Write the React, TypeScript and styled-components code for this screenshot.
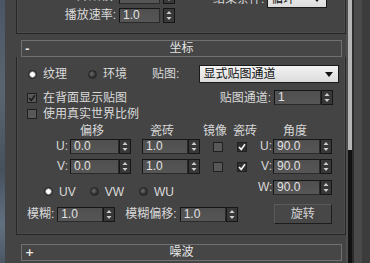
import React from 'react'
import styled, { createGlobalStyle } from 'styled-components'

const GlobalStyle = createGlobalStyle`
  html, body {
    margin: 0;
    padding: 0;
    background: #444444;
  }
  body {
    width: 370px;
    height: 263px;
    overflow: hidden;
    font-family: "Liberation Sans", "Noto Sans CJK SC", sans-serif;
    font-size: 12px;
    color: #d8d8d8;
  }
`

const Screen = styled.div`
  display: flex;
  width: 370px;
  height: 263px;
  overflow: hidden;
  background: #444444;
`

const DesktopEdge = styled.div`
  width: 5px;
  flex: none;
  background: linear-gradient(180deg, #4a5664 0%, #5a6571 35%, #46515d 65%, #617080 85%, #4c5763 100%);
`

const Gutter = styled.div`
  width: 11px;
  flex: none;
`

const Panel = styled.div`
  width: 330px;
  flex: none;
  display: flex;
  flex-direction: column;
`

const Frame = styled.div`
  border: 1px solid #262626;
  border-top: none;
  box-shadow: inset 1px 0 0 #4c4c4c, inset -1px -1px 0 #4c4c4c;
`

const TopBody = styled.div`
  display: flex;
  margin-top: -12px;
  padding-bottom: 10px;
`

const LeftCol = styled.div`
  display: flex;
  flex-direction: column;
  gap: 3px;
`

const LabeledRow = styled.div`
  display: flex;
  align-items: center;
  height: 16px;
`

const Label = styled.span<{ $w?: number; $ml?: number }>`
  display: inline-block;
  ${({ $w }) => ($w ? `width: ${$w}px; text-align: right;` : '')}
  margin-left: ${({ $ml }) => $ml ?? 0}px;
  margin-right: 3px;
  line-height: 14px;
  white-space: nowrap;
  color: #dadada;
`

const RightCol = styled.div`
  display: flex;
  align-items: center;
  margin-left: 38px;
  margin-top: 2px;
  height: 18px;
`

const Header = styled.div<{ $mt: number }>`
  position: relative;
  margin: ${({ $mt }) => $mt}px 4px 0 5px;
  height: 17px;
  box-sizing: border-box;
  border: 1px solid #707070;
  background: #464646;
  display: flex;
  align-items: center;
  justify-content: center;
  color: #e4e4e4;
  line-height: 15px;
`

const HeaderSign = styled.span`
  position: absolute;
  left: 3px;
  top: 0;
  font-family: "DejaVu Sans", sans-serif;
  font-size: 11px;
  font-weight: bold;
  line-height: 15px;
  color: #e8e8e8;
`

const CoordBody = styled(Frame)`
  padding: 8px 0 10px 10px;
  display: flex;
  flex-direction: column;
`

const Row = styled.div<{ $h: number; $mt: number }>`
  display: flex;
  align-items: center;
  height: ${({ $h }) => $h}px;
  margin-top: ${({ $mt }) => $mt}px;
`

const RadioDot = styled.span<{ $on?: boolean; $ml?: number }>`
  display: inline-block;
  flex: none;
  width: 9px;
  height: 9px;
  border-radius: 50%;
  box-sizing: border-box;
  margin-left: ${({ $ml }) => $ml ?? 0}px;
  margin-right: 6px;
  border: 1px solid #252525;
  background: ${({ $on }) =>
    $on
      ? 'radial-gradient(circle at 50% 50%, #ffffff 0 2px, #9a9a9a 2.6px, #5a5a5a 4px)'
      : 'radial-gradient(circle at 40% 40%, #5e5e5e 0 1px, #2e2e2e 3.5px)'};
`

const ChoiceText = styled.span<{ $ml?: number }>`
  margin-left: ${({ $ml }) => $ml ?? 0}px;
  line-height: 14px;
  color: #dadada;
  white-space: nowrap;
`

const Dropdown = styled.div<{ $w: number; $h: number; $ml?: number }>`
  display: flex;
  align-items: center;
  justify-content: space-between;
  width: ${({ $w }) => $w}px;
  height: ${({ $h }) => $h}px;
  margin-left: ${({ $ml }) => $ml ?? 0}px;
  box-sizing: border-box;
  padding: 0 5px 0 3px;
  background: linear-gradient(180deg, #f2f2f2, #dcdcdc);
  border: 1px solid #1a1a1a;
  color: #111;
  line-height: 14px;
`

const Box = styled.span<{ $tone: 'light' | 'dark'; $ml?: number }>`
  display: inline-flex;
  align-items: center;
  justify-content: center;
  flex: none;
  width: 10px;
  height: 10px;
  box-sizing: border-box;
  margin-left: ${({ $ml }) => $ml ?? 0}px;
  border: 1px solid #202020;
  background: ${({ $tone }) => ($tone === 'light' ? '#585858' : '#2f2f2f')};
`

const Spacer = styled.div`
  flex: 1;
`

const FieldWrap = styled.div<{ $gap?: number; $ml?: number; $mr?: number }>`
  display: flex;
  height: 15px;
  gap: ${({ $gap }) => $gap ?? 0}px;
  margin-left: ${({ $ml }) => $ml ?? 0}px;
  margin-right: ${({ $mr }) => $mr ?? 0}px;
  flex: none;
`

const NumBox = styled.div<{ $w: number }>`
  width: ${({ $w }) => $w}px;
  box-sizing: border-box;
  border: 1px solid #161616;
  border-right-color: #2a2a2a;
  border-bottom-color: #2a2a2a;
  background: linear-gradient(180deg, #4f4f4f, #565656);
  padding-left: 3px;
  line-height: 13px;
  color: #e2e2e2;
  font-size: 12px;
`

const SpinBox = styled.div`
  width: 12px;
  box-sizing: border-box;
  border: 1px solid #161616;
  background: #383838;
  display: flex;
  align-items: center;
  justify-content: center;
`

const UVGrid = styled.div`
  display: grid;
  grid-template-columns: 24px 62px 11px 58px 29px 29px 15px 60px;
  grid-template-rows: 12px 20px 21px 15px;
  margin-left: 18px;
  margin-top: 7px;
  align-items: start;
`

const ColHead = styled.div<{ $col: number; $ml: number }>`
  grid-column: ${({ $col }) => $col};
  grid-row: 1;
  padding-left: ${({ $ml }) => $ml}px;
  line-height: 12px;
  margin-top: -2px;
  white-space: nowrap;
`

const AxisLabel = styled.div<{ $col: number; $row: number }>`
  grid-column: ${({ $col }) => $col};
  grid-row: ${({ $row }) => $row};
  text-align: right;
  padding-right: 1px;
  line-height: 15px;
`

const Cell = styled.div<{ $col: number; $row: number; $pl?: number; $pt?: number }>`
  grid-column: ${({ $col }) => $col};
  grid-row: ${({ $row }) => $row};
  padding-left: ${({ $pl }) => $pl ?? 0}px;
  padding-top: ${({ $pt }) => $pt ?? 0}px;
  display: flex;
`

const AxisChoices = styled.div`
  grid-column: 1 / 7;
  grid-row: 4;
  display: flex;
  align-items: center;
  height: 15px;
  margin-top: 4px;
  margin-left: -1px;
`

const ActionButton = styled.div`
  width: 58px;
  height: 20px;
  box-sizing: border-box;
  margin-left: 36px;
  border: 1px solid #5a5a5a;
  border-right-color: #1c1c1c;
  border-bottom-color: #1c1c1c;
  background: #474747;
  display: flex;
  align-items: center;
  justify-content: center;
  line-height: 14px;
  color: #d4d4d4;
`

const ScrollZone = styled.div`
  flex: 1;
  display: flex;
`

const ScrollEdge = styled.div`
  width: 2px;
  background: #4f4f4f;
`

const Thumb = styled.div`
  width: 4px;
  background: linear-gradient(180deg, #b6b6b6 0, #b6b6b6 150px, #121212 150px);
`

const TrackDark = styled.div`
  width: 2px;
  background: #2c2c2c;
`

const TrackMid = styled.div`
  width: 8px;
  background: #4a4a4a;
`

const TrackFar = styled.div`
  flex: 1;
  background: #3c3c3c;
`

const Spinner = () => (
  <SpinBox>
    <svg width="6" height="11" viewBox="0 0 6 11">
      <path d="M3 1 L5.5 4 H0.5 Z" fill="#cfcfcf" />
      <path d="M0.5 7 H5.5 L3 10 Z" fill="#cfcfcf" />
    </svg>
  </SpinBox>
)

const NumField = ({ value, w, gap, ml, mr }: { value: string; w: number; gap?: number; ml?: number; mr?: number }) => (
  <FieldWrap $gap={gap} $ml={ml} $mr={mr}>
    <NumBox $w={w}>{value}</NumBox>
    <Spinner />
  </FieldWrap>
)

const Check = ({ on, tone, ml }: { on?: boolean; tone: 'light' | 'dark'; ml?: number }) => (
  <Box $tone={tone} $ml={ml}>
    {on && (
      <svg width="8" height="8" viewBox="0 0 8 8">
        <path d="M1 4 L3.2 6.4 L7 1.2" fill="none" stroke={tone === 'light' ? '#1c1c1c' : '#f2f2f2'} strokeWidth="1.6" />
      </svg>
    )}
  </Box>
)

const Arrow = () => (
  <svg width="8" height="5" viewBox="0 0 8 5">
    <path d="M0 0 H8 L4 5 Z" fill="#111" />
  </svg>
)

export default function App() {
  return (
    <>
      <GlobalStyle />
      <Screen>
        <DesktopEdge />
        <Gutter />
        <Panel>
          <Frame>
            <TopBody>
              <LeftCol>
                <LabeledRow>
                  <Label $w={99}>开始帧:</Label>
                  <NumField value="0" w={41} gap={3} />
                </LabeledRow>
                <LabeledRow>
                  <Label $w={99}>播放速率:</Label>
                  <NumField value="1.0" w={41} gap={3} />
                </LabeledRow>
              </LeftCol>
              <RightCol>
                <Label>结束条件:</Label>
                <Dropdown $w={60} $h={18}>
                  <span>循环</span>
                  <Arrow />
                </Dropdown>
              </RightCol>
            </TopBody>
          </Frame>

          <Header $mt={6}>
            <HeaderSign>-</HeaderSign>
            坐标
          </Header>
          <CoordBody>
            <Row $h={18} $mt={0}>
              <RadioDot $on $ml={1} />
              <ChoiceText>纹理</ChoiceText>
              <RadioDot $ml={21} />
              <ChoiceText>环境</ChoiceText>
              <Label $ml={25}>贴图:</Label>
              <Dropdown $w={140} $h={18} $ml={17}>
                <span>显式贴图通道</span>
                <Arrow />
              </Dropdown>
            </Row>
            <Row $h={15} $mt={7}>
              <Check on tone="light" />
              <ChoiceText $ml={6}>在背面显示贴图</ChoiceText>
              <Spacer />
              <Label>贴图通道:</Label>
              <NumField value="1" w={47} mr={12} />
            </Row>
            <Row $h={12} $mt={3}>
              <Check tone="light" />
              <ChoiceText $ml={6}>使用真实世界比例</ChoiceText>
            </Row>

            <UVGrid>
              <ColHead $col={2} $ml={11}>偏移</ColHead>
              <ColHead $col={4} $ml={8}>瓷砖</ColHead>
              <ColHead $col={5} $ml={3}>镜像</ColHead>
              <ColHead $col={6} $ml={4}>瓷砖</ColHead>
              <ColHead $col={8} $ml={10}>角度</ColHead>

              <AxisLabel $col={1} $row={2}>U:</AxisLabel>
              <Cell $col={2} $row={2} $pl={1}><NumField value="0.0" w={49} /></Cell>
              <Cell $col={4} $row={2}><NumField value="1.0" w={46} /></Cell>
              <Cell $col={5} $row={2} $pl={13} $pt={3}><Check tone="light" /></Cell>
              <Cell $col={6} $row={2} $pl={8} $pt={3}><Check on tone="dark" /></Cell>
              <AxisLabel $col={7} $row={2}>U:</AxisLabel>
              <Cell $col={8} $row={2}><NumField value="90.0" w={47} /></Cell>

              <AxisLabel $col={1} $row={3}>V:</AxisLabel>
              <Cell $col={2} $row={3} $pl={1}><NumField value="0.0" w={49} /></Cell>
              <Cell $col={4} $row={3}><NumField value="1.0" w={46} /></Cell>
              <Cell $col={5} $row={3} $pl={13} $pt={3}><Check tone="light" /></Cell>
              <Cell $col={6} $row={3} $pl={8} $pt={3}><Check on tone="dark" /></Cell>
              <AxisLabel $col={7} $row={3}>V:</AxisLabel>
              <Cell $col={8} $row={3}><NumField value="90.0" w={47} /></Cell>

              <AxisChoices>
                <RadioDot $on />
                <ChoiceText>UV</ChoiceText>
                <RadioDot $ml={14} />
                <ChoiceText>VW</ChoiceText>
                <RadioDot $ml={15} />
                <ChoiceText>WU</ChoiceText>
              </AxisChoices>
              <AxisLabel $col={7} $row={4}>W:</AxisLabel>
              <Cell $col={8} $row={4}><NumField value="90.0" w={47} /></Cell>
            </UVGrid>

            <Row $h={20} $mt={9}>
              <Label>模糊:</Label>
              <NumField value="1.0" w={46} />
              <Label $ml={10}>模糊偏移:</Label>
              <NumField value="1.0" w={46} />
              <ActionButton>旋转</ActionButton>
            </Row>
          </CoordBody>

          <Header $mt={9}>
            <HeaderSign>+</HeaderSign>
            噪波
          </Header>
          <Header $mt={4}>
            <HeaderSign>+</HeaderSign>
            输出
          </Header>
        </Panel>
        <ScrollZone>
          <ScrollEdge />
          <Thumb />
          <TrackDark />
          <TrackMid />
          <TrackFar />
        </ScrollZone>
      </Screen>
    </>
  )
}
